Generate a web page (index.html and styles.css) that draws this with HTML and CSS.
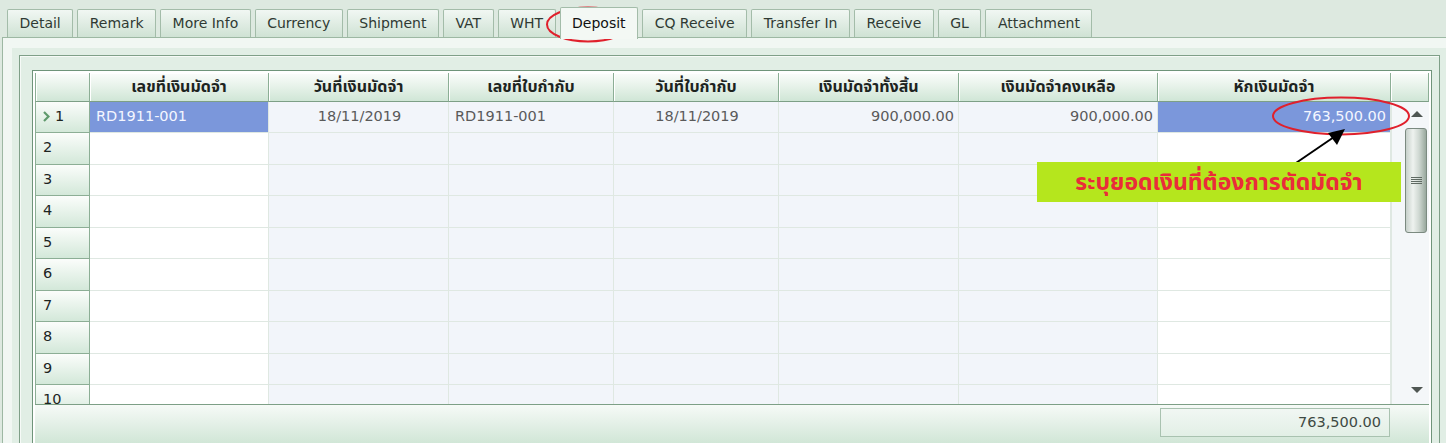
FILE: index.html
```html
<!DOCTYPE html>
<html lang="th">
<head>
    <meta charset="UTF-8">
    <title>Deposit</title>
    <link rel="stylesheet" href="styles.css">
</head>
<body>

    <div class="tabs">
        <div class="tab">Detail</div>
        <div class="tab">Remark</div>
        <div class="tab">More Info</div>
        <div class="tab">Currency</div>
        <div class="tab">Shipment</div>
        <div class="tab">VAT</div>
        <div class="tab">WHT</div>
        <div class="tab active">Deposit</div>
        <div class="tab">CQ Receive</div>
        <div class="tab">Transfer In</div>
        <div class="tab">Receive</div>
        <div class="tab">GL</div>
        <div class="tab">Attachment</div>
    </div>

    <div class="panel">
        <div class="panel-inner">
            <div class="frame">
                <div class="grid">
                    <div class="grid-head">
                        <div class="hcell"></div>
                        <div class="hcell">เลขที่เงินมัดจำ</div>
                        <div class="hcell">วันที่เงินมัดจำ</div>
                        <div class="hcell">เลขที่ใบกำกับ</div>
                        <div class="hcell">วันที่ใบกำกับ</div>
                        <div class="hcell">เงินมัดจำทั้งสิ้น</div>
                        <div class="hcell">เงินมัดจำคงเหลือ</div>
                        <div class="hcell">หักเงินมัดจำ</div>
                        <div class="hcell"></div>
                    </div>

                    <div class="grid-body">
                        <div class="rows">
                            <div class="row">
                                <div class="rh">
                                    <svg class="cur" width="7" height="11" viewBox="0 0 7 11"><polyline points="1,1 5.5,5.5 1,10" fill="none" stroke="#5f9a6c" stroke-width="2.2"/></svg>1
                                </div>
                                <div class="c sel">RD1911-001</div>
                                <div class="c ro center">18/11/2019</div>
                                <div class="c ro">RD1911-001</div>
                                <div class="c ro center">18/11/2019</div>
                                <div class="c ro right">900,000.00</div>
                                <div class="c ro right">900,000.00</div>
                                <div class="c sel right">763,500.00</div>
                            </div>
                            <div class="row"><div class="rh">2</div><div class="c"></div><div class="c ro"></div><div class="c ro"></div><div class="c ro"></div><div class="c ro"></div><div class="c ro"></div><div class="c"></div></div>
                            <div class="row"><div class="rh">3</div><div class="c"></div><div class="c ro"></div><div class="c ro"></div><div class="c ro"></div><div class="c ro"></div><div class="c ro"></div><div class="c"></div></div>
                            <div class="row"><div class="rh">4</div><div class="c"></div><div class="c ro"></div><div class="c ro"></div><div class="c ro"></div><div class="c ro"></div><div class="c ro"></div><div class="c"></div></div>
                            <div class="row"><div class="rh">5</div><div class="c"></div><div class="c ro"></div><div class="c ro"></div><div class="c ro"></div><div class="c ro"></div><div class="c ro"></div><div class="c"></div></div>
                            <div class="row"><div class="rh">6</div><div class="c"></div><div class="c ro"></div><div class="c ro"></div><div class="c ro"></div><div class="c ro"></div><div class="c ro"></div><div class="c"></div></div>
                            <div class="row"><div class="rh">7</div><div class="c"></div><div class="c ro"></div><div class="c ro"></div><div class="c ro"></div><div class="c ro"></div><div class="c ro"></div><div class="c"></div></div>
                            <div class="row"><div class="rh">8</div><div class="c"></div><div class="c ro"></div><div class="c ro"></div><div class="c ro"></div><div class="c ro"></div><div class="c ro"></div><div class="c"></div></div>
                            <div class="row"><div class="rh">9</div><div class="c"></div><div class="c ro"></div><div class="c ro"></div><div class="c ro"></div><div class="c ro"></div><div class="c ro"></div><div class="c"></div></div>
                            <div class="row"><div class="rh">10</div><div class="c"></div><div class="c ro"></div><div class="c ro"></div><div class="c ro"></div><div class="c ro"></div><div class="c ro"></div><div class="c"></div></div>
                        </div>
                        <div class="vscroll">
                            <div class="arrow-up"></div>
                            <div class="thumb"><div class="grip"></div></div>
                            <div class="arrow-down"></div>
                        </div>
                    </div>

                    <div class="grid-foot">
                        <div class="total">763,500.00</div>
                    </div>
                </div>
            </div>
        </div>
    </div>

    <!-- annotation overlay -->
    <svg class="marks" width="1446" height="443" viewBox="0 0 1446 443">
        <ellipse cx="588" cy="24.5" rx="41" ry="17" fill="none" stroke="#e0202c" stroke-width="2"/>
        <ellipse cx="1341" cy="116" rx="68" ry="18.5" fill="none" stroke="#e0202c" stroke-width="2"/>
        <line x1="1293" y1="165" x2="1334" y2="137" stroke="#000" stroke-width="2"/>
        <polygon points="1345,129 1328,133 1337,145" fill="#000"/>
    </svg>
    <div class="note">ระบุยอดเงินที่ต้องการตัดมัดจำ</div>

</body>
</html>
```

FILE: styles.css
```css
body {
    margin: 0;
    width: 1446px;
    height: 443px;
    overflow: hidden;
    position: relative;
    background-color: #dde9e0;
    font-family: Tahoma, "DejaVu Sans", "Noto Sans Thai", sans-serif;
    font-size: 14.5px;
    color: #333;
}

/* tab strip */
.tabs {
    display: flex;
    gap: 4px;
    padding: 9px 0 0 7px;
    height: 28px;
}

.tab {
    height: 27px;
    line-height: 27px;
    padding: 0 11.5px;
    font-size: 14px;
    border: 1px solid #a3bca9;
    border-bottom: none;
    border-radius: 2px 2px 0 0;
    background: linear-gradient(#f1f7f3, #cfe2d4);
    color: #2f3a33;
}

.tab.active {
    height: 31px;
    line-height: 30px;
    margin-top: -2px;
    position: relative;
    z-index: 1;
    background: #f3f8f4;
    color: #111;
}

/* tab page */
.panel {
    margin-left: 2px;
    border-top: 1px solid #9db8a3;
    border-left: 1px solid #9db8a3;
    background-color: #f1f7f3;
    padding: 10px 0 0 9px;
}

.panel-inner {
    background-color: #e1eee5;
    padding: 7px 0 0 7px;
}

.frame {
    width: max-content;
    border: 1px solid #7f9f88;
    box-shadow: inset 1px 1px 0 #f6faf7;
    padding: 14px 7px 0 12px;
}

/* grid */
.grid {
    border: 1px solid #6f947a;
    padding: 2px 2px 0 2px;
    background-color: #fff;
}

.grid-head,
.row {
    display: grid;
    grid-template-columns: 55px 179px 180px 165px 165px 180px 199px 233px 38px;
}

.row {
    grid-template-columns: 55px 179px 180px 165px 165px 180px 199px 233px;
    height: 31px;
}

.row:nth-child(even) {
    height: 32px;
}

.hcell {
    height: 28px;
    line-height: 28px;
    text-align: center;
    font-size: 16px;
    font-weight: bold;
    color: #1d241f;
    background: linear-gradient(#fbfdfb, #d0e6d6);
    border-right: 1px solid #8cae95;
    border-bottom: 1px solid #7d9f86;
    box-shadow: inset 1px 1px 0 #fff;
}

.hcell:first-child {
    border-left: 1px solid #8cae95;
}

.grid-body {
    display: flex;
    height: 302px;
    overflow: hidden;
}

.rh {
    padding-left: 7px;
    line-height: 29px;
    color: #1d241f;
    background: linear-gradient(#fbfdfb, #d3e8d9);
    border-left: 1px solid #8cae95;
    border-right: 1px solid #8cae95;
    border-bottom: 1px solid #8cae95;
}

.cur {
    margin-right: 5px;
    vertical-align: -1px;
}

.c {
    padding: 0 4px 0 6px;
    line-height: 29px;
    color: #5a5a5a;
    background-color: #fff;
    border-right: 1px solid #dfe8e2;
    border-bottom: 1px solid #dfe8e2;
    white-space: nowrap;
}

.c.ro {
    background-color: #f2f5fa;
}

.c.sel {
    background-color: #7b97db;
    color: #f4f6ff;
}

.center {
    text-align: center;
}

.right {
    text-align: right;
}

/* vertical scroll bar */
.vscroll {
    width: 37px;
    border-left: 1px solid #dfe8e2;
    background-color: #f4f7f9;
}

.arrow-up,
.arrow-down {
    width: 0;
    height: 0;
    margin-left: 19px;
    border-left: 6px solid transparent;
    border-right: 6px solid transparent;
}

.arrow-up {
    margin-top: 9px;
    border-bottom: 6px solid #4f5753;
}

.arrow-down {
    margin-top: 154px;
    border-top: 6px solid #4f5753;
}

.thumb {
    width: 20px;
    height: 103px;
    margin: 11px 0 0 13px;
    border: 1px solid #7b8a80;
    border-radius: 3px;
    background: linear-gradient(90deg, #c7d1cb, #eef2ef 35%, #cfd8d2 65%, #98a89d);
    display: flex;
    align-items: center;
    justify-content: center;
}

.grip {
    width: 11px;
    height: 7px;
    background: repeating-linear-gradient(#5f6a63 0 1px, transparent 1px 2px);
}

.grid-foot {
    height: 37px;
    border-top: 1px solid #7d9f86;
    background: linear-gradient(#f6faf7, #cfe5d5);
    padding: 3px 0 0 1125px;
}

.total {
    width: 220px;
    height: 27px;
    line-height: 27px;
    padding-right: 8px;
    text-align: right;
    color: #3e4a43;
    border: 1px solid #a9c2b0;
    background: linear-gradient(#f1f7f3, #e2efe6);
}

/* annotation */
.marks {
    position: absolute;
    left: 0;
    top: 0;
    pointer-events: none;
}

.note {
    position: absolute;
    left: 1037px;
    top: 162px;
    width: 364px;
    height: 40px;
    line-height: 40px;
    text-align: center;
    background-color: #b5e61d;
    color: #ea2c3a;
    font-size: 23px;
    font-weight: bold;
}
```
